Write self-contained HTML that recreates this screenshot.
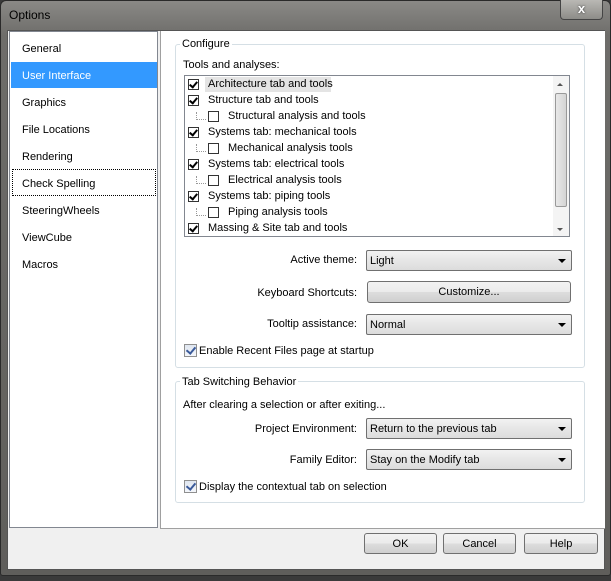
<!DOCTYPE html>
<html><head><style>
*{margin:0;padding:0;box-sizing:border-box}
body{width:611px;height:581px;overflow:hidden;background:#3a3a3a;font-family:"Liberation Sans",sans-serif;font-size:11px;line-height:15px;color:#000;position:relative}
.a{position:absolute}
.frame{left:0;top:0;width:611px;height:576px;background:linear-gradient(180deg,#8a8986 0%,#6e6d6a 6%,#5f5e5b 100%);border:1px solid #2a2a2a;border-radius:6px 6px 3px 3px}
.title{left:9px;top:8px;font-size:12px;color:#000}
.close{left:560px;top:0;width:43px;height:20px;border:1px solid #444;border-top:none;border-radius:0 0 4px 4px;background:linear-gradient(#b9b8b4,#8d8c88);color:#fff;font-weight:bold;font-size:13px;text-align:center;line-height:18px;text-shadow:0 0 2px #333}
.inner{left:7px;top:30px;width:598px;height:540px;background:#f0f0f0;border:1px solid #555}
.left{left:9px;top:31px;width:149px;height:497px;background:#fff;border:1px solid #828790}
.right{left:160px;top:31px;width:445px;height:498px;background:#fff;border-left:1px solid #a0a0a0;border-bottom:1px solid #a0a0a0}
.li{left:22px;font-size:11px}
.grp{border:1px solid #d5dfe5;border-radius:3px}
.gl{background:#fff;padding:0 2px}
.cb{width:11px;height:11px;border:1px solid #333;background:#fff}
.cb.c::after{content:"";position:absolute;left:2px;top:0px;width:3px;height:6px;border:solid #000;border-width:0 2px 2px 0;transform:rotate(40deg)}
.cb2{width:13px;height:13px;border:1px solid #8f8f8f;background:linear-gradient(#dfe6f0,#f4f6fa)}
.cb2::after{content:"";position:absolute;left:3px;top:0px;width:4px;height:7px;border:solid #3a5a9a;border-width:0 2px 2px 0;transform:rotate(40deg)}
.combo{height:21px;border:1px solid #707070;border-radius:2px;background:linear-gradient(#f2f2f2,#e6e6e6 50%,#dcdcdc);padding:3px 0 0 3px}
.combo::after{content:"";position:absolute;right:5px;top:8px;border:4px solid transparent;border-top:4px solid #000;border-bottom:none}
.btn{border:1px solid #707070;border-radius:3px;background:linear-gradient(#f2f2f2,#ebebeb 50%,#dddddd 51%,#cfcfcf);text-align:center;line-height:20px}
.lbl{text-align:right;width:190px;left:167px}
.dot{border-left:1px dotted #999;border-bottom:1px dotted #999;width:10px;height:8px}
</style></head><body>
<div class="a frame"></div>
<div class="a title">Options</div>
<div class="a close">x</div>
<div class="a inner"></div>
<div class="a left"></div>
<div class="a" style="left:11px;top:62px;width:146px;height:26px;background:#3399ff"></div>
<div class="a" style="left:12px;top:169px;width:144px;height:27px;border:1px dotted #000"></div>
<div class="a li" style="top:42px">General</div>
<div class="a li" style="top:69px;color:#fff">User Interface</div>
<div class="a li" style="top:96px">Graphics</div>
<div class="a li" style="top:123px">File Locations</div>
<div class="a li" style="top:150px">Rendering</div>
<div class="a li" style="top:177px">Check Spelling</div>
<div class="a li" style="top:204px">SteeringWheels</div>
<div class="a li" style="top:231px">ViewCube</div>
<div class="a li" style="top:258px">Macros</div>
<div class="a right"></div>

<div class="a grp" style="left:175px;top:44px;width:410px;height:324px"></div>
<div class="a gl" style="left:180px;top:37px">Configure</div>
<div class="a" style="left:183px;top:58px">Tools and analyses:</div>
<div class="a" style="left:184px;top:75px;width:386px;height:162px;border:1px solid #828790;background:#fff"></div>
<div class="a" style="left:553px;top:76px;width:16px;height:160px;background:#f4f4f4"></div>
<div class="a" style="left:555px;top:93px;width:12px;height:114px;border:1px solid #999;border-radius:2px;background:linear-gradient(90deg,#e8e8e8,#d4d4d4)"></div>
<div class="a" style="left:557px;top:83px;border:3px solid transparent;border-bottom:3px solid #555;border-top:none"></div>
<div class="a" style="left:557px;top:228px;border:3px solid transparent;border-top:3px solid #555;border-bottom:none"></div>
<div class="a" style="left:205px;top:77px;width:126px;height:15px;background:#e4e4e4"></div>

<div class="a cb c" style="left:188px;top:79px"></div><div class="a" style="left:208px;top:77px">Architecture tab and tools</div>
<div class="a cb c" style="left:188px;top:95px"></div><div class="a" style="left:208px;top:93px">Structure tab and tools</div>
<div class="a dot" style="left:196px;top:112px"></div><div class="a cb" style="left:208px;top:111px"></div><div class="a" style="left:228px;top:109px">Structural analysis and tools</div>
<div class="a cb c" style="left:188px;top:127px"></div><div class="a" style="left:208px;top:125px">Systems tab: mechanical tools</div>
<div class="a dot" style="left:196px;top:144px"></div><div class="a cb" style="left:208px;top:143px"></div><div class="a" style="left:228px;top:141px">Mechanical analysis tools</div>
<div class="a cb c" style="left:188px;top:159px"></div><div class="a" style="left:208px;top:157px">Systems tab: electrical tools</div>
<div class="a dot" style="left:196px;top:176px"></div><div class="a cb" style="left:208px;top:175px"></div><div class="a" style="left:228px;top:173px">Electrical analysis tools</div>
<div class="a cb c" style="left:188px;top:191px"></div><div class="a" style="left:208px;top:189px">Systems tab: piping tools</div>
<div class="a dot" style="left:196px;top:208px"></div><div class="a cb" style="left:208px;top:207px"></div><div class="a" style="left:228px;top:205px">Piping analysis tools</div>
<div class="a cb c" style="left:188px;top:223px"></div><div class="a" style="left:208px;top:221px">Massing &amp; Site tab and tools</div>

<div class="a lbl" style="top:253px">Active theme:</div>
<div class="a combo" style="left:366px;top:250px;width:206px">Light</div>
<div class="a lbl" style="top:286px">Keyboard Shortcuts:</div>
<div class="a btn" style="left:367px;top:281px;width:204px;height:22px">Customize...</div>
<div class="a lbl" style="top:317px">Tooltip assistance:</div>
<div class="a combo" style="left:366px;top:314px;width:206px">Normal</div>
<div class="a cb2" style="left:184px;top:344px"></div>
<div class="a" style="left:199px;top:344px">Enable Recent Files page at startup</div>

<div class="a grp" style="left:175px;top:381px;width:410px;height:122px"></div>
<div class="a gl" style="left:180px;top:375px">Tab Switching Behavior</div>
<div class="a" style="left:183px;top:398px">After clearing a selection or after exiting...</div>
<div class="a lbl" style="top:422px">Project Environment:</div>
<div class="a combo" style="left:366px;top:418px;width:206px">Return to the previous tab</div>
<div class="a lbl" style="top:453px">Family Editor:</div>
<div class="a combo" style="left:366px;top:449px;width:206px">Stay on the Modify tab</div>
<div class="a cb2" style="left:184px;top:480px"></div>
<div class="a" style="left:199px;top:480px">Display the contextual tab on selection</div>

<div class="a btn" style="left:364px;top:533px;width:73px;height:21px">OK</div>
<div class="a btn" style="left:443px;top:533px;width:73px;height:21px">Cancel</div>
<div class="a btn" style="left:524px;top:533px;width:74px;height:21px">Help</div>
</body></html>
